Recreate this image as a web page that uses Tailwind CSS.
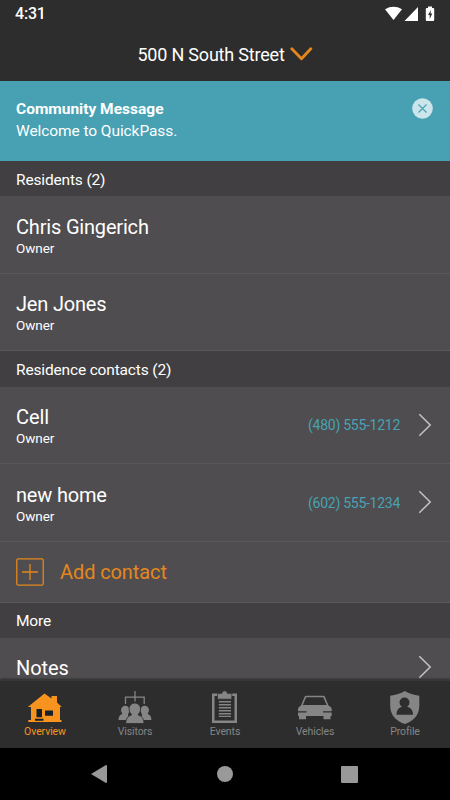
<!DOCTYPE html>
<html lang="en">
<head>
<meta charset="utf-8">
<meta name="viewport" content="width=device-width, initial-scale=1">
<title>QuickPass</title>
<script src="https://cdn.jsdelivr.net/npm/@tailwindcss/browser@4"></script>
</head>
<body class="bg-black">
<div class="w-[450px] h-[800px] flex flex-col overflow-hidden bg-[#4f4d4f] text-white font-['Roboto',sans-serif]">
  <header class="h-[81px] shrink-0 bg-[#2d2d2d] flex flex-col">
    <div class="h-7 flex items-center justify-between pl-[15px] pr-[15px]">
      <span class="text-[16px] leading-7 font-medium tracking-[-0.2px]">4:31</span>
      <svg class="w-[50px] h-[16px]" viewBox="385 5 50 16" fill="#fff">
        <path d="M385 8.2Q393.500 3.500 402 8.200L393.500 19Z"/>
        <path d="M418 6V20H404.500Z"/>
        <path d="M428 5.500h4v1.500h1.200q1 0 1 1v11q0 1-1 1h-6.400q-1 0-1-1V8q0-1 1-1h1.200z"/>
        <path fill="#2d2d2d" d="M431 9l-3 5h1.700v4l2.600-5.500h-1.800z"/>
      </svg>
    </div>
    <div class="h-[53px] flex items-center justify-center gap-[5px]">
      <span class="text-[18px] leading-[53px] tracking-[-0.2px]">500 N South Street</span>
      <svg class="w-[23px] h-[14px] -mt-[2px]" viewBox="0 0 23 14" fill="none" stroke="#e5871d" stroke-width="2.8" stroke-linecap="round" stroke-linejoin="round"><path d="M1.800 1.800L11.500 11.800 20.800 1.800"/></svg>
    </div>
  </header>

  <section class="h-20 shrink-0 bg-[#47a1b3] flex justify-between pl-4 pr-[17px] pt-4">
    <div class="leading-[22px] text-[15.5px]">
      <h2 class="font-bold pt-px">Community Message</h2>
      <p class="tracking-[-0.08px]">Welcome to QuickPass.</p>
    </div>
    <svg class="w-[21px] h-[21px] mt-px" viewBox="0 0 21 21"><circle cx="10.500" cy="10.500" r="10.300" fill="#cce5ea"/><path d="M6.500 6.500l8 8m0-8l-8 8" stroke="#47a1b3" stroke-width="1.100"/></svg>
  </section>

  <main class="h-[519px] shrink-0 overflow-hidden">
    <h3 class="h-[35px] bg-[#413f41] pl-4 text-[15.5px] leading-[38px] tracking-[-0.16px]">Residents (2)</h3>
    <div class="h-[78px] border-b border-[#5a585a] pl-4 pt-[18px]">
      <div class="text-[20px] leading-[26px] tracking-[-0.18px]">Chris Gingerich</div>
      <div class="text-[13.5px] leading-[16px] tracking-[-0.05px]">Owner</div>
    </div>
    <div class="h-[77px] border-b border-[#5a585a] pl-4 pt-[17px]">
      <div class="text-[20px] leading-[26px] tracking-[-0.18px]">Jen Jones</div>
      <div class="text-[13.5px] leading-[16px] tracking-[-0.05px]">Owner</div>
    </div>
    <h3 class="h-9 bg-[#413f41] pl-4 text-[15.5px] leading-[38px] tracking-[-0.16px]">Residence contacts (2)</h3>
    <div class="h-[77px] border-b border-[#5a585a] pl-4 pr-[18px] flex items-center">
      <div class="flex-1"><div class="text-[20px] leading-[26px] tracking-[-0.1px]">Cell</div><div class="text-[13.5px] leading-[16px] tracking-[-0.05px]">Owner</div></div>
      <span class="text-[14px] tracking-[-0.27px] text-[#48a2b4] mr-[18px] mt-px">(480) 555-1212</span>
      <svg class="w-[14px] h-[24px]" viewBox="0 0 14 24" fill="none" stroke="#c5c4c5" stroke-width="1.500"><path d="M1.300 1.300L12.200 12 1.300 22.700"/></svg>
    </div>
    <div class="h-[78px] border-b border-[#5a585a] pl-4 pr-[18px] flex items-center">
      <div class="flex-1"><div class="text-[20px] leading-[26px] tracking-[-0.18px]">new home</div><div class="text-[13.5px] leading-[16px] tracking-[-0.05px]">Owner</div></div>
      <span class="text-[14px] tracking-[-0.27px] text-[#48a2b4] mr-[18px] mt-px">(602) 555-1234</span>
      <svg class="w-[14px] h-[24px] -mt-px" viewBox="0 0 14 24" fill="none" stroke="#c5c4c5" stroke-width="1.500"><path d="M1.300 1.300L12.200 12 1.300 22.700"/></svg>
    </div>
    <div class="h-[61px] border-b border-[#5a585a] pl-4 flex items-center gap-4">
      <svg class="w-[28px] h-[28px]" viewBox="0 0 28 28" fill="none" stroke="#e5871d" stroke-width="1.300"><rect x=".8" y=".8" width="26.400" height="26.400" rx="1.500"/><path d="M6 14h16M14 6v16"/></svg>
      <span class="text-[20px] tracking-[-0.1px] text-[#e5871d]">Add contact</span>
    </div>
    <h3 class="h-[35px] bg-[#413f41] pl-4 text-[15.5px] leading-[37px] tracking-[-0.16px]">More</h3>
    <div class="h-[78px] pl-4 pr-[18px] pt-[17px] flex items-start justify-between">
      <span class="text-[20px] leading-[26px] tracking-[-0.1px]">Notes</span>
      <svg class="w-[14px] h-[24px]" viewBox="0 0 14 24" fill="none" stroke="#c5c4c5" stroke-width="1.500"><path d="M1.300 1.300L12.200 12 1.300 22.700"/></svg>
    </div>
  </main>

  <nav class="h-[68px] shrink-0 bg-[#2d2d2d] border-t border-[#383738] shadow-[0_-1px_2px_#2d2d2d] grid grid-cols-5 text-[10.500px] leading-[14px] tracking-[-0.1px] text-[#858585]">
    <div class="flex flex-col items-center pt-[9px] gap-px text-[#f7941f]">
      <svg class="w-[36px] h-[34px]" viewBox="27 10 36 34" fill="currentColor">
        <path d="M44.500 13.500L51.500 18.500V16h5.500v6.500l4.800 4.500H60V40H61.500V42H28.300V40H31V27H27.800Z"/>
        <path fill="#17212a" d="M36.500 29h5.500v8.300h-5.500zM45 30.500h8v5.300h-8zM35 38.800h8.500v2h-8.500z"/>
      </svg>
      <span>Overview</span>
    </div>
    <div class="flex flex-col items-center pt-[9px] gap-px">
      <svg class="w-[36px] h-[34px]" viewBox="27 10 36 34" fill="currentColor">
        <path d="M35.500 24v-6.800h18.700V24M45 11v10.500" fill="none" stroke="currentColor" stroke-width="1.300"/>
        <path d="M31 30a4.300 4.300 0 1 1 8.600 0q0 2.500-1.500 4v6H28.500q0-5 4-6.300Q31 32.300 31 30Z"/>
        <path d="M59 30a4.300 4.300 0 1 0-8.600 0q0 2.500 1.500 4v6h9.500q0-5-3.900-6.300Q59 32.300 59 30Z"/>
        <path stroke="#2d2d2d" stroke-width=".8" d="M39 29a5.800 6 0 1 1 11.600 0q0 3.500-2.300 5.300v.8q5.700 1.400 5.700 8.400H35.700q0-7 5.700-8.400v-.8Q39 32.500 39 29Z"/>
      </svg>
      <span>Visitors</span>
    </div>
    <div class="flex flex-col items-center pt-[9px] gap-px">
      <svg class="w-[36px] h-[34px]" viewBox="27 10 36 34" fill="currentColor">
        <path fill-rule="evenodd" d="M32 13.500h25V43H32ZM34.500 16v24.500h20V16Z"/>
        <path stroke="#2d2d2d" stroke-width=".7" d="M37.500 13.500h4.300Q42 10.800 44.600 10.800T47.400 13.500h4.400v5.700H37.500Z"/>
        <path d="M38.800 21h12.200v1.600H38.800zm0 3h12.200v1.600H38.800zm0 3h12.200v1.600H38.800zm0 3h12.200v1.600H38.800zm0 3h12.200v1.600H38.800zm0 2.800h12.200v1.200H38.800z"/>
      </svg>
      <span>Events</span>
    </div>
    <div class="flex flex-col items-center pt-[9px] gap-px">
      <svg class="w-[36px] h-[34px]" viewBox="27 10 36 34" fill="currentColor">
        <path fill-rule="evenodd" d="M34.500 17Q35 15.700 36.300 15.700H53.200Q54.500 15.700 55 17L58.500 25.500Q61.500 26.500 61.700 29V36H60.500V39.300H53.500V36H36V39.300H29V36H28V29Q28.300 26.500 31 25.500ZM36.200 17.200L32.800 25H56.700L53.300 17.200Z"/>
        <path d="M28 31.300h8.500v1.200h-8.500zm25 0h9v1.200h-9z" fill="#2d2d2d"/>
      </svg>
      <span>Vehicles</span>
    </div>
    <div class="flex flex-col items-center pt-[9px] gap-px">
      <svg class="w-[36px] h-[34px]" viewBox="27 10 36 34" fill="currentColor">
        <path d="M44.800 11Q51 14.800 59.300 15.800V26Q59 39 44.800 44Q30.500 39 30.200 26V15.800Q38.500 14.800 44.800 11Z"/>
        <path fill="#2d2d2d" d="M39.500 22.500a5 5 0 1 1 10 0q0 3-2.300 4.300 5.600 1 5.800 8H36.500q.2-7 5.500-8-2.500-1.300-2.500-4.300Z"/>
      </svg>
      <span>Profile</span>
    </div>
  </nav>

  <footer class="h-[52px] shrink-0 bg-black grid grid-cols-[16px_1fr_17px] items-center pl-[91px] pr-[92px]">
    <svg class="w-[16px] h-[18px]" viewBox="0 0 16 18"><path fill="#999" d="M0 9L15 0q1 0 1 1v16q0 1-1 1z"/></svg>
    <span class="w-4 h-4 rounded-full bg-[#999] ml-[110px]"></span>
    <span class="w-[17px] h-[17px] rounded-[1px] bg-[#999]"></span>
  </footer>
</div>
</body>
</html>
